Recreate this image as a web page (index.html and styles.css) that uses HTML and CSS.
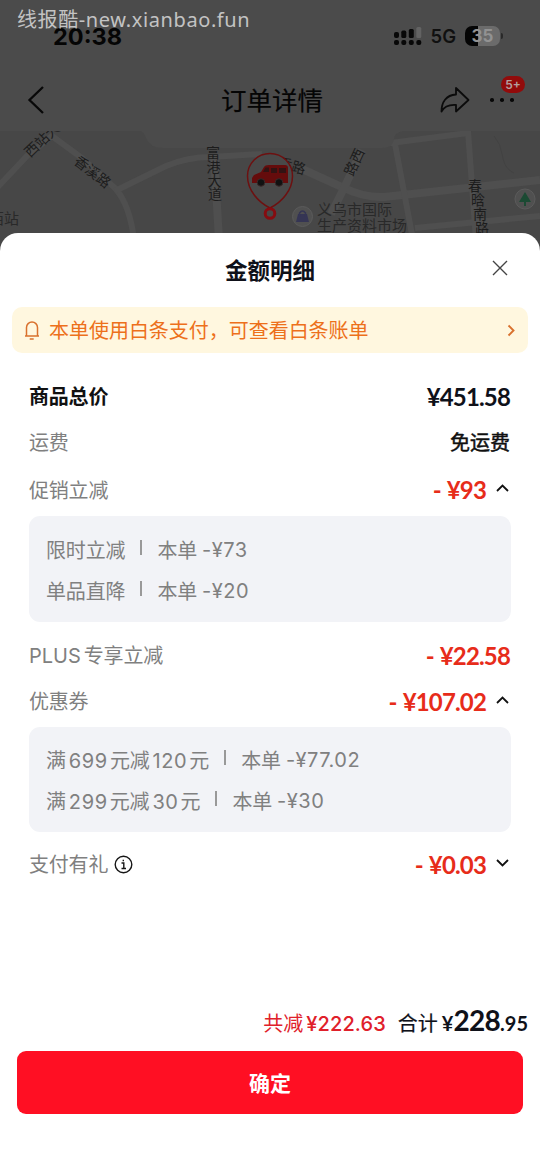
FILE: index.html
```html
<!DOCTYPE html>
<html lang="zh-CN">
<head>
<meta charset="utf-8">
<title>金额明细</title>
<link rel="stylesheet" href="styles.css">
</head>
<body>
<div class="screen">
  <div class="watermark">线报酷-new.xianbao.fun</div>
  <header class="top">
    <div class="status">
      <span class="time">20:38</span>
      <svg class="signal" width="28" height="20" viewBox="0 0 28 20">
        <rect x="0" y="6" width="5" height="6" rx="2"/><rect x="7.3" y="4.6" width="5" height="7.4" rx="1.6"/><rect x="14.8" y="3" width="5" height="9" rx="1.5"/><rect class="faint" x="22.3" y="1" width="5" height="11" rx="1.5"/>
        <rect x="0" y="14" width="5" height="5" rx="2"/><rect x="7.3" y="14" width="5" height="5" rx="2"/><rect x="14.8" y="14" width="5" height="5" rx="2"/><rect x="22.3" y="14" width="5" height="5" rx="2"/>
      </svg>
      <span class="net">5G</span>
      <span class="battery">35</span>
      <i class="battery-tip"></i>
    </div>
    <nav class="nav">
      <svg class="back" width="18" height="30" viewBox="0 0 18 30"><path d="M16 2 2.5 15 16 28"/></svg>
      <h1 class="nav-title">订单详情</h1>
      <svg class="share" width="30" height="28" viewBox="0 0 30 28"><path d="M16 2 28.5 14 16 25.5V19C9 18.5 4 21 1.5 25.5 1.500 16.500 6 9 16 8.500Z"/></svg>
      <span class="more"><i></i><i></i><i></i><b class="badge">5+</b></span>
    </nav>
  </header>
  <svg class="map" width="540" height="127" viewBox="0 131 540 127">
    <g class="roads">
      <path d="M-5 190 27 156 52 136 82 158 115 188Q130 205 134 240"/>
      <path d="M115 191 166 166Q188 157 210 157L262 154"/>
      <path class="wide" d="M214 154 219 240"/>
      <path class="wide" d="M300 168 342 187Q364 198 384 197L540 180"/>
      <path class="wide" d="M362 150 345 186 331 214"/>
      <path d="M395 144 413 240M375 145 468 133M468 131 476 240M415 228 540 216"/>
    </g>
    <path class="trail" d="M494 136Q501 144 502 154C504 166 508 170 514 173"/>
    <path class="tab" d="M140 131H403Q394 133 394 139 393 148 382 148H163Q150 148 146 138 144 132 140 131Z"/>
    <g class="labels">
      <text transform="translate(30 158) rotate(-43)">西站大</text>
      <text transform="translate(73 163) rotate(38)">香溪路</text>
      <text x="206" y="158">富</text><text x="206.500" y="172">港</text><text x="207.500" y="186">大</text><text x="208" y="199">道</text>
      <text x="277" y="167" transform="rotate(16 277 167)">香路</text>
      <text transform="translate(353 177) rotate(-65)">路西</text>
      <text x="468" y="191">春</text><text x="471" y="205">晗</text><text x="473" y="219">南</text><text x="475" y="233">路</text>
    </g>
    <g class="places">
      <text x="317" y="215">义乌市国际</text><text x="317" y="231">生产资料市场</text><text x="-11" y="224">西站</text>
    </g>
    <circle class="poi" cx="302.500" cy="216.500" r="10"/>
    <path class="bag" d="M298 214H307L309 222H296Z"/><path class="bag-handle" d="M299.500 217V213Q302.500 209 305.500 213V217"/>
    <circle class="poi" cx="525" cy="199" r="10"/>
    <path class="tree" d="M525 192 531 202H526V206H524V202H519Z"/>
    <path class="pin" d="M270 208C258 202 247.500 190 247.500 176A22.500 22.500 0 0 1 292.500 176C292.500 190 282 202 270 208Z"/>
    <path class="van" d="M252 178 254 175 261 172 264 167Q265 165 269 165H285Q288 165 288 168V183H252V179Z"/>
    <path class="van-glass" d="M263 172 265.500 167.500H269V172ZM271 168H277V173H271ZM279 168H286V173H279Z"/>
    <circle class="wheel" cx="261" cy="182.500" r="3.800"/><circle class="wheel" cx="279" cy="182.500" r="3.800"/>
    <circle class="ring" cx="270" cy="213.500" r="4.800"/>
  </svg>
  <main class="sheet">
    <div class="sheet-head">
      <h2>金额明细</h2>
      <svg class="close" width="16" height="16" viewBox="0 0 16 16"><path d="M1 1 15 15M15 1 1 15"/></svg>
    </div>
    <div class="notice">
      <svg class="bell" width="16" height="20" viewBox="0 0 16 20"><path d="M1 16H15M2.500 16V7.500A5.500 5.500 0 0 1 13.500 7.500V16M5.700 19H9.700"/></svg>
      <span class="notice-text">本单使用白条支付，可查看白条账单</span>
      <svg class="go" width="8" height="13" viewBox="0 0 8 13"><path d="M1.500 1.500 6.500 6.500 1.500 11.500"/></svg>
    </div>
    <section class="list">
      <div class="row total"><span class="label">商品总价</span><span class="amount">¥451.58</span></div>
      <div class="row"><span class="label">运费</span><span class="free">免运费</span></div>
      <div class="row tall"><span class="label">促销立减</span><span class="amount off"><em>-</em>¥93</span><svg class="chev" width="13" height="8" viewBox="0 0 13 8"><path d="M1 7 6.500 1.500 12 7"/></svg></div>
      <div class="detail">
        <div class="line"><span>限时立减</span><i class="bar"></i><span>本单</span><span class="num">-¥73</span></div>
        <div class="line"><span>单品直降</span><i class="bar"></i><span>本单</span><span class="num">-¥20</span></div>
      </div>
      <div class="row after"><span class="label"><span class="plus">PLUS</span>专享立减</span><span class="amount off"><em>-</em>¥22.58</span></div>
      <div class="row"><span class="label">优惠券</span><span class="amount off"><em>-</em>¥107.02</span><svg class="chev" width="13" height="8" viewBox="0 0 13 8"><path d="M1 7 6.500 1.500 12 7"/></svg></div>
      <div class="detail second">
        <div class="line"><span>满<b>699</b>元减<b>120</b>元</span><i class="bar"></i><span>本单</span><span class="num">-¥77.02</span></div>
        <div class="line"><span>满<b>299</b>元减<b>30</b>元</span><i class="bar"></i><span>本单</span><span class="num">-¥30</span></div>
      </div>
      <div class="row after last"><span class="label">支付有礼</span><svg class="info" width="19" height="19" viewBox="0 0 19 19"><circle cx="9.500" cy="9.500" r="8.300"/><path d="M7.500 8H9.800V13.500M7.500 13.500H12M9.300 4.700V6.300"/></svg><span class="amount off"><em>-</em>¥0.03</span><svg class="chev" width="13" height="8" viewBox="0 0 13 8"><path d="M1 1 6.500 6.500 12 1"/></svg></div>
    </section>
    <footer class="foot">
      <div class="sum"><span class="saved">共减<b>¥222.63</b></span><span class="sum-label">合计</span><span class="pay"><small class="yen">¥</small>228<small>.95</small></span></div>
      <button class="ok">确定</button>
    </footer>
  </main>
</div>
</body>
</html>
```
FILE: styles.css
```css
* { box-sizing: border-box; }
body { margin: 0; font-family: Inter, "Noto Sans CJK SC", sans-serif; }
h1, h2 { margin: 0; }
i, em { font-style: normal; }
svg { display: block; flex: none; fill: none; }
.screen { position: relative; width: 540px; height: 1168px; overflow: hidden; display: flex; flex-direction: column; background: #4b4b4b; }
.watermark { position: absolute; left: 17px; top: 6px; font: 20px/28px "Noto Sans", "Noto Sans CJK SC", sans-serif; letter-spacing: .6px; color: #c3c3c3; white-space: nowrap; z-index: 1; }

.top { height: 131px; flex: none; color: #050505; }
.status { height: 72px; padding: 26px 37px 0 53px; display: flex; align-items: flex-start; }
.time { font-size: 23.5px; line-height: 21px; font-weight: 700; margin-right: auto; }
.signal rect { fill: #080808; }
.signal .faint { fill: #636363; }
.net { font-size: 18.500px; line-height: 21px; font-weight: 600; margin: 0 9px; color: #101010; }
.battery { width: 35px; height: 20px; border-radius: 7px; background: linear-gradient(90deg, #050505 36%, #6b6b6b 36%); color: #929292; font-size: 17px; line-height: 20px; font-weight: 700; text-align: center; }
.battery-tip { width: 2px; height: 6px; margin: 7px 0 0 1px; border-radius: 0 2px 2px 0; background: #292929; }
.nav { height: 56px; padding: 0 24px 0 27px; display: flex; align-items: center; }
.back path { stroke: #080808; stroke-width: 2.300; }
.nav-title { font-size: 25.5px; line-height: 36px; font-weight: 400; margin: 1px auto 0 176px; -webkit-text-stroke: .2px #080808; }
.share { margin-right: 20px; }
.share path { stroke: #0b0b0b; stroke-width: 1.800; stroke-linejoin: round; }
.more { position: relative; display: flex; gap: 6.5px; width: 26px; }
.more i { flex: none; width: 3.600px; height: 3.600px; border-radius: 50%; background: #080808; }
.badge { position: absolute; left: 11px; top: -22px; width: 24px; height: 17px; border-radius: 9px; background: #920b0b; color: #b5a0a0; font-size: 12px; line-height: 17px; text-align: center; font-weight: 600; }

.map { background: #474747; margin-bottom: -25px; }
.roads path { stroke: #4f4f4f; stroke-width: 6; }
.roads .wide { stroke-width: 8; }
.trail { stroke: #424242; }
.tab { fill: #4b4b4b; }
.labels { fill: #1c1c1c; font-size: 14px; }
.places { fill: #292929; font-size: 15px; }
.poi { fill: #505050; stroke: #5b5b5b; }
.bag { fill: #353554; }
.bag-handle { stroke: #353554; stroke-width: 1.500; }
.tree { fill: #1b4a33; }
.pin { stroke: #6d1010; stroke-width: 1.500; fill: #494949; }
.van { fill: #650c0c; }
.van-glass { fill: #321313; }
.wheel { fill: #111; stroke: #3a2a2a; stroke-width: 1; }
.ring { stroke: #860c10; stroke-width: 3; }

.sheet { position: relative; flex: 1; display: flex; flex-direction: column; border-radius: 18px 18px 0 0; background: #fff; color: #0f1119; }
.sheet-head { display: grid; grid-template-columns: 1fr auto 1fr; align-items: center; height: 74px; padding: 2px 32px 0; flex: none; }
.sheet-head h2 { grid-column: 2; font-size: 22.5px; line-height: 32px; font-weight: 700; }
.close { justify-self: end; margin-top: -6px; }
.close path { stroke: #444; stroke-width: 1.400; }
.notice { display: flex; align-items: center; height: 46px; margin: 0 12px; padding: 0 13px 0 12px; border-radius: 10px; background: #fff7df; flex: none; color: #ed701b; }
.bell path, .go path { stroke: #d9712e; stroke-width: 1.500; }
.go path { stroke-width: 1.900; }
.notice-text { font-size: 20px; line-height: 30px; margin: 2px auto 0 9px; letter-spacing: -.03px; }
.list { padding: 20px 29px 0; }
.row { height: 46px; display: flex; align-items: center; padding-right: 1px; }
.row.tall { height: 49px; }
.row.after { margin-top: 10px; }
.label { font-size: 20px; line-height: 30px; color: #808080; letter-spacing: -.2px; padding-top: 2px; }
.row.last { margin-top: 9px; }
.total .label { color: #111; font-weight: 700; }
.plus { font-size: 20px; margin-right: 3px; letter-spacing: 0; }
.free { margin-left: auto; padding-top: 2px; font-size: 20px; line-height: 30px; color: #101010; -webkit-text-stroke: .5px; }
.amount { margin-left: auto; padding-top: 1px; font-family: Lato, sans-serif; font-size: 24px; line-height: 30px; font-weight: 700; letter-spacing: -.85px; }
.off { color: #e72c1a; }
.off em { margin-right: 6px; }
.chev { margin: -3px 1px 0 10px; }
.chev path { stroke: #111; stroke-width: 1.800; }
.info { margin-left: 6px; }
.info path, .info circle { stroke: #161616; stroke-width: 1.400; }
.detail { height: 106px; margin-top: 2px; padding: 13px 17px 11px; border-radius: 11px; background: #f2f3f7; }
.second { height: 105px; margin-top: 3px; padding-top: 12px; }
.line { display: flex; align-items: center; height: 41px; font-size: 20px; color: #808080; letter-spacing: -.15px; }
.line b { font-weight: 400; margin: 0 2px 0 3px; letter-spacing: .6px; }
.bar { flex: none; width: 2px; height: 15px; margin: -4px 15px 0 15px; background: #999; }
.num { margin-left: 5px; letter-spacing: .5px; }

.foot { margin-top: auto; padding: 0 17px 54px; }
.sum { display: flex; align-items: baseline; justify-content: flex-end; height: 48px; margin-right: -5px; line-height: 34px; font-size: 20px; }
.saved { color: #e0202a; }
.saved b { font-weight: 500; margin-left: 3px; letter-spacing: .1px; }
.sum-label { margin-left: 12px; -webkit-text-stroke: .2px; }
.pay { margin-left: 4px; font: 700 28px/34px Lato, sans-serif; letter-spacing: -.7px; }
.pay small { font-size: 20px; letter-spacing: 0; }
.ok { display: block; width: 506px; height: 63px; padding: 0; border: 0; border-radius: 9px; background: #ff0f23; color: #fff; font: 700 21px/63px "Noto Sans CJK SC", sans-serif; }
```
